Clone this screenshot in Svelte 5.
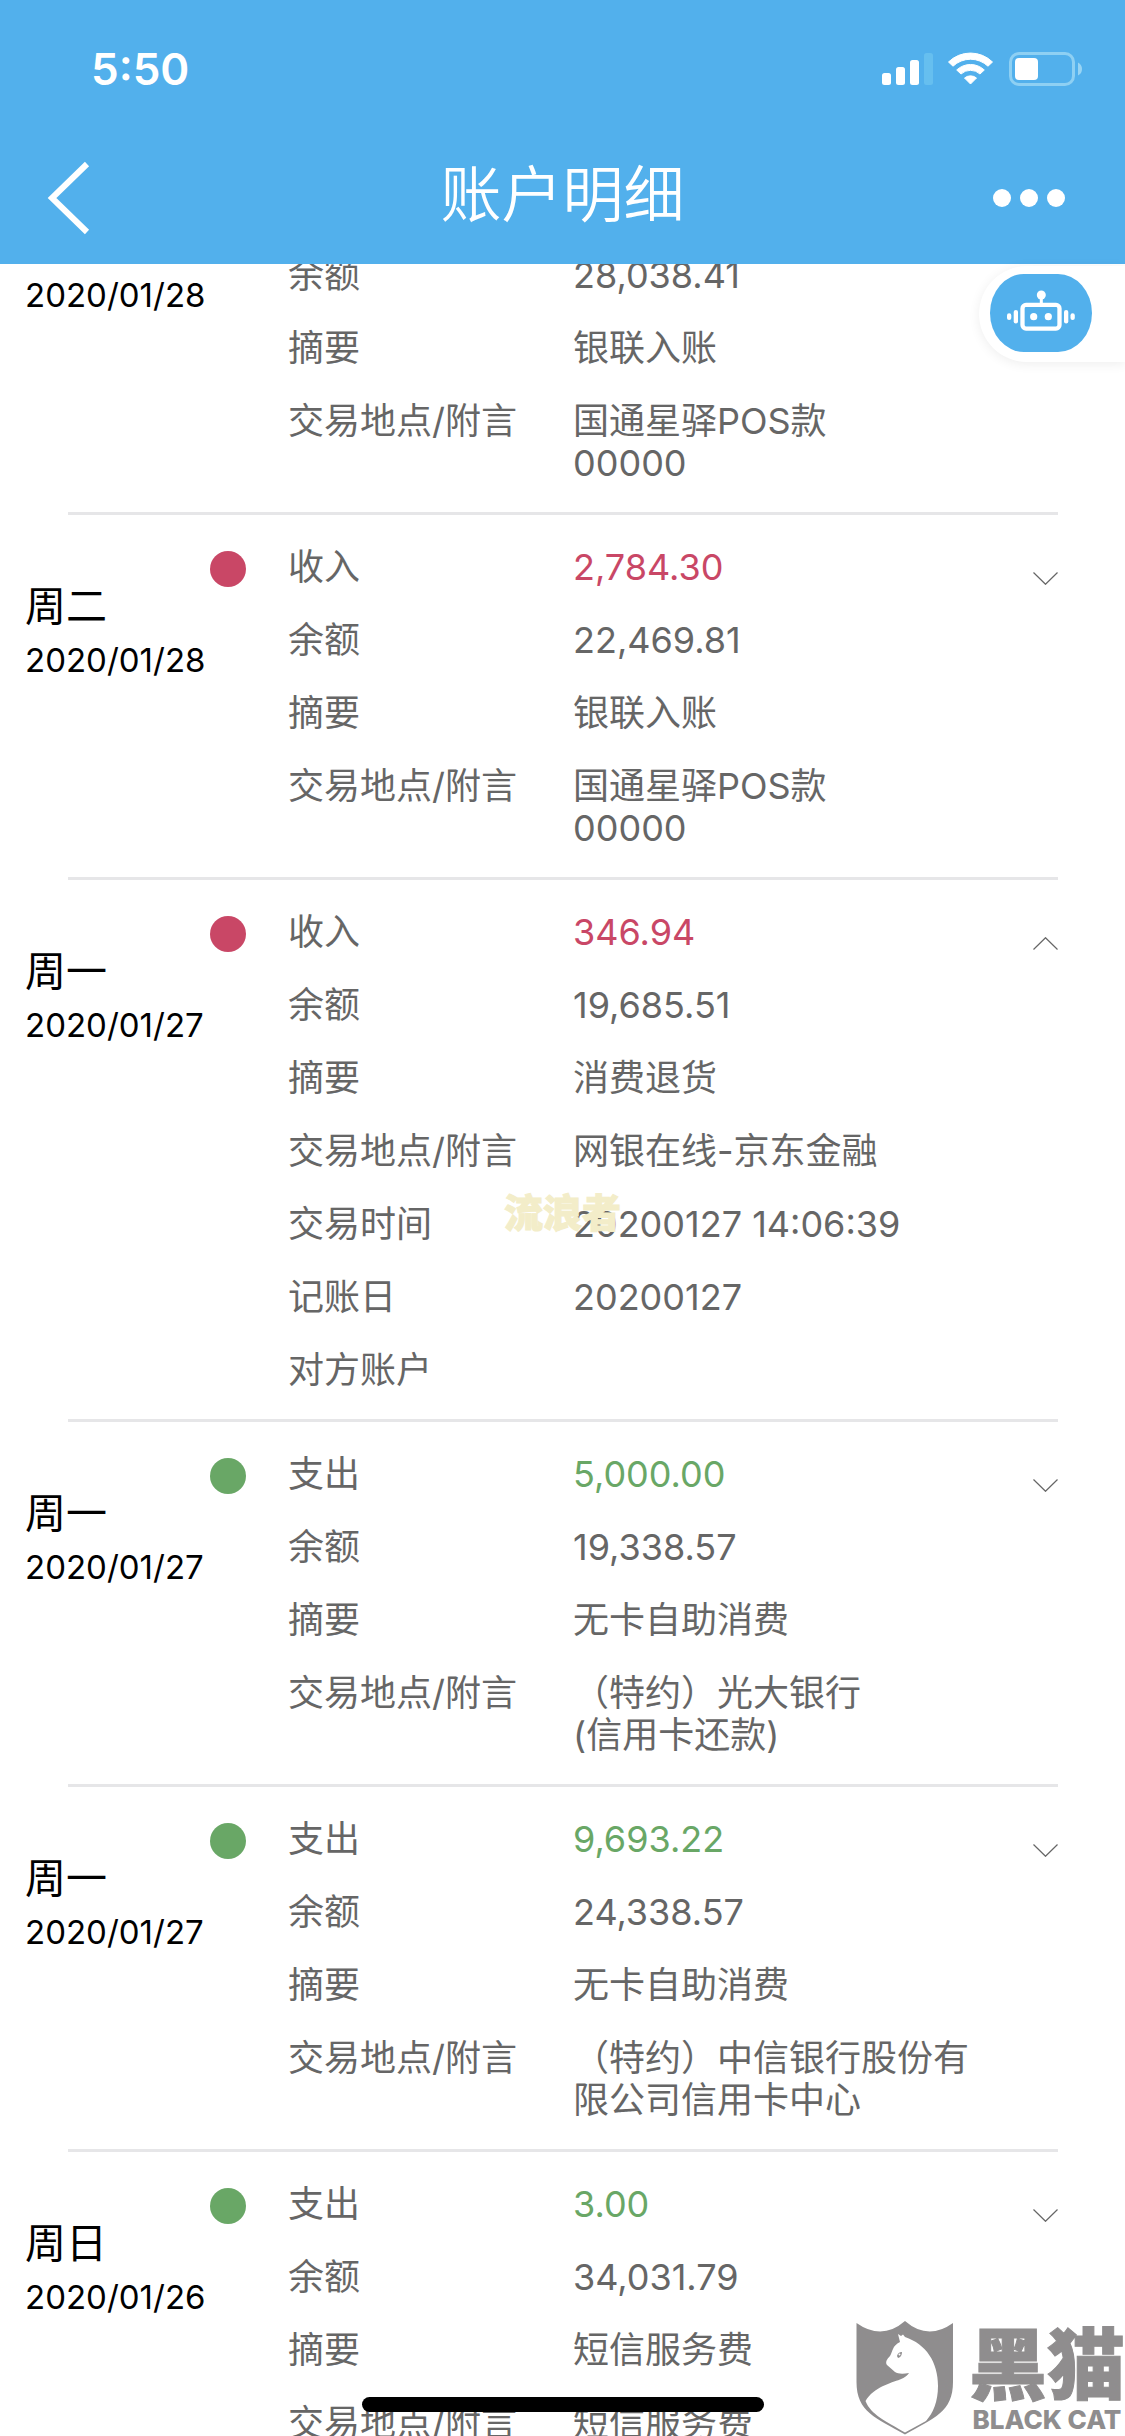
<script>
	import { onMount } from 'svelte';

	let list
	let records = [
		{ day: '周二', date: '2020/01/28', type: '收入', amount: '5,568.60', balance: '28,038.41', summary: '银联入账', note: '国通星驿POS款\n00000' },
		{ day: '周二', date: '2020/01/28', type: '收入', amount: '2,784.30', balance: '22,469.81', summary: '银联入账', note: '国通星驿POS款\n00000' },
		{ day: '周一', date: '2020/01/27', type: '收入', amount: '346.94', balance: '19,685.51', summary: '消费退货', note: '网银在线-京东金融', time: '20200127 14:06:39', booked: '20200127', account: '', open: true },
		{ day: '周一', date: '2020/01/27', type: '支出', amount: '5,000.00', balance: '19,338.57', summary: '无卡自助消费', note: '（特约）光大银行\n(信用卡还款)' },
		{ day: '周一', date: '2020/01/27', type: '支出', amount: '9,693.22', balance: '24,338.57', summary: '无卡自助消费', note: '（特约）中信银行股份有限公司信用卡中心' },
		{ day: '周日', date: '2020/01/26', type: '支出', amount: '3.00', balance: '34,031.79', summary: '短信服务费', note: '短信服务费' }
	]

	const getRows = (item) => {
		let rows = [
			['余额', item.balance],
			['摘要', item.summary],
			['交易地点/附言', item.note]
		]
		if (item.open) {
			rows.push(['交易时间', item.time || ''], ['记账日', item.booked || ''], ['对方账户', item.account || ''])
		}
		return rows
	}

	const toggle = (item) => {
		item.open = !item.open
		records = records
	}

	onMount(() => {
		list.scrollTop = 114
	});
</script>

<div class="screen">
	<header>
		<div class="status">
			<span class="clock">5:50</span>
			<svg class="status-icons" width="202" height="36" viewBox="0 0 202 36" fill="#fff">
				<rect x="1" y="22" width="9" height="12" rx="2.5" />
				<rect x="15" y="16" width="9" height="18" rx="2.5" />
				<rect x="29" y="9" width="9" height="25" rx="2.5" />
				<rect x="43" y="2" width="9" height="32" rx="2.5" fill="#66bfef" />
				<g transform="translate(67 1)">
					<path d="M0.5 10 A31.500 31.500 0 0 1 44.500 10 L40 14.200 A25.500 25.500 0 0 0 5 14.200 Z" stroke="#fff" stroke-linejoin="round" />
					<path d="M8.700 18 A20 20 0 0 1 36.300 18 L32 22 A14 14 0 0 0 13 22 Z" stroke="#fff" stroke-linejoin="round" />
					<path d="M16.500 26 A9.500 9.500 0 0 1 28.500 26 L22.500 32 Z" stroke="#fff" stroke-linejoin="round" />
				</g>
				<rect x="129.500" y="2.500" width="63" height="31" rx="8.500" fill="none" stroke="#8ed0f3" stroke-width="3" />
				<rect x="134" y="7" width="23" height="22" rx="4" />
				<path d="M197 11.500 Q201 13.500 201 18 Q201 22.500 197 24.500 Z" fill="#98d4f4" />
			</svg>
		</div>
		<div class="titlebar">
			<button class="bar-button" aria-label="返回">
				<svg width="44" height="74" viewBox="0 0 44 74"><path d="M41 3 L6 37 L41 71" fill="none" stroke="#fff" stroke-width="6" /></svg>
			</button>
			<h1>账户明细</h1>
			<button class="bar-button more" aria-label="更多">
				<svg width="72" height="18" viewBox="0 0 72 18" fill="#fff"><circle cx="9" cy="9" r="9" /><circle cx="36" cy="9" r="9" /><circle cx="63" cy="9" r="9" /></svg>
			</button>
		</div>
	</header>

	<main bind:this={list}>
		{#each records as item}
			<article>
				<div class="when">
					<p class="day">{item.day}</p>
					<p class="date">{item.date}</p>
				</div>
				<span class="dot" class:out={item.type === '支出'}></span>
				<dl>
					<dt>{item.type}</dt>
					<dd class="amount" class:out={item.type === '支出'}>{item.amount}</dd>
					{#each getRows(item) as [label, value]}
						<dt>{label}</dt>
						<dd>{value}</dd>
					{/each}
				</dl>
				<button class="toggle" aria-label="展开" aria-expanded={!!item.open} on:click={() => toggle(item)}>
					<svg width="25" height="13" viewBox="0 0 25 13"><path d={item.open ? 'M0.5 12.500 L12.500 0.700 L24.500 12.500' : 'M0.5 0.500 L12.500 12.300 L24.500 0.500'} fill="none" stroke="#666" stroke-width="1.200" /></svg>
				</button>
			</article>
			<hr>
		{/each}
	</main>

	<div class="helper">
		<button class="robot" aria-label="智能客服">
			<svg width="102" height="78" viewBox="0 0 102 78" fill="#fff">
				<circle cx="51.300" cy="21" r="4.500" />
				<rect x="49.800" y="23" width="3" height="7" />
				<rect x="32.500" y="30.900" width="37" height="23.700" rx="3.500" fill="none" stroke="#fff" stroke-width="4.300" />
				<circle cx="43.700" cy="42.700" r="3.600" />
				<circle cx="58.300" cy="42.700" r="3.600" />
				<rect x="23.700" y="36" width="4.300" height="13.500" rx="2.100" />
				<rect x="17" y="39.300" width="4.300" height="6.800" rx="2.100" />
				<rect x="74" y="36" width="4.300" height="13.500" rx="2.100" />
				<rect x="80.500" y="39.300" width="4.300" height="6.800" rx="2.100" />
			</svg>
		</button>
	</div>

	<div class="watermark">流浪者</div>
	<div class="home"></div>

	<div class="brand">
		<svg width="98" height="116" viewBox="0 0 98 116">
			<path d="M0.5 3 Q26 21 49 1 Q72 21 97 3 V62 C97 92 78 98 49 114.500 C20 98 0.5 92 0.5 62 Z" fill="#8f8d8e" />
			<path d="M42 14 L45 16 L47 14.500 L49 17 C70 24 82 42 82 66 C82 82 77 93 70 101 L49 112.500 C30 101 15 95 9.500 81 C18 67 35 63 44 59.500 C49 57.500 52 55 53 53 C47 54 42 54 39 52 L31 45 C29 42 31 39 34 36 C37 31 36 26 44 22 Z" fill="#fff" />
			<path d="M41 36 Q42 32 46 32 Q46 37 42 38 Z" fill="#8f8d8e" />
			<circle cx="43.500" cy="34.500" r="1" fill="#fff" />
		</svg>
		<div class="brand-text">
			<span class="brand-zh">黑猫</span>
			<span class="brand-en">BLACK CAT</span>
		</div>
	</div>
</div>

<style>
	:global(body) {
		background-color: #fff;
	}

	.screen {
		position: relative;
		display: flex;
		flex-direction: column;
		height: 100vh;
		overflow: hidden;
		font-family: Inter, "Noto Sans CJK SC", sans-serif;
	}

	h1, p, dl, dd {
		margin: 0;
	}

	button {
		padding: 0;
		border: none;
		background: none;
		cursor: pointer;
	}

	svg {
		display: block;
	}

	header {
		flex: none;
		height: 264px;
		background-color: #52b0ec;
		color: #fff;
	}

	.status {
		display: flex;
		justify-content: space-between;
		align-items: center;
		height: 138px;
		padding: 0 42px 0 91px;
	}

	.clock {
		font-size: 44px;
		font-weight: 600;
	}

	.titlebar {
		display: grid;
		grid-template-columns: 1fr auto 1fr;
		align-items: center;
		height: 120px;
		padding: 0 46px;
	}

	.bar-button {
		justify-self: start;
	}

	.more {
		justify-self: end;
		padding-right: 14px;
	}

	h1 {
		padding-bottom: 6px;
		font-size: 61px;
		font-weight: 350;
		line-height: 80px;
	}

	main {
		flex: 1;
		min-height: 0;
		overflow-y: auto;
		scrollbar-width: none;
	}

	article {
		display: grid;
		grid-template-columns: 185px 78px 1fr 25px;
		padding: 0 67px 0 25px;
	}

	hr {
		height: 3px;
		margin: 0 67px 0 68px;
		border: none;
		background-color: #e6e6e8;
	}

	.when {
		padding-top: 64px;
		line-height: 54px;
		color: #000;
	}

	.day {
		font-size: 41px;
	}

	.date {
		font-size: 33px;
	}

	.dot {
		width: 36px;
		height: 36px;
		margin-top: 36px;
		border-radius: 50%;
		background-color: #c94766;
	}

	.dot.out {
		background-color: #69a766;
	}

	dl {
		display: grid;
		grid-template-columns: 285px minmax(0, 405px);
		row-gap: 31px;
		align-content: start;
		padding: 31px 0 28px;
		font-size: 36px;
		line-height: 42px;
		color: #666;
	}

	dd {
		min-height: 42px;
		white-space: pre-line;
	}

	.amount {
		color: #c94766;
	}

	.amount.out {
		color: #69a766;
	}

	.toggle {
		align-self: start;
		padding: 57px 0 20px;
	}

	.helper {
		position: absolute;
		top: 266px;
		right: 0;
		padding: 8px 33px 10px 11px;
		border-radius: 48px 0 0 48px;
		background-color: #fff;
		box-shadow: 0 2px 12px rgba(0, 0, 0, 0.07);
	}

	.robot {
		display: block;
		border-radius: 34px / 39px;
		background-color: #52b0ec;
	}

	.watermark {
		position: absolute;
		top: 1183px;
		left: 0;
		right: 0;
		text-align: center;
		font-size: 39px;
		font-weight: 900;
		line-height: 60px;
		color: #f3edc9;
		-webkit-text-stroke: 1px #f3edc9;
		pointer-events: none;
	}

	.home {
		position: absolute;
		bottom: 24px;
		left: 50%;
		width: 402px;
		height: 15px;
		margin-left: -201px;
		border-radius: 8px;
		background-color: #000;
	}

	.brand {
		position: absolute;
		right: 0;
		bottom: 0;
		display: flex;
		gap: 15px;
		color: #8f8d8e;
	}

	.brand-text {
		display: flex;
		flex-direction: column;
		align-items: center;
		padding-top: 8px;
	}

	.brand-zh {
		font-size: 78px;
		font-weight: 900;
		line-height: 76px;
		-webkit-text-stroke: 1px #8f8d8e;
	}

	.brand-en {
		font-size: 26px;
		font-weight: 800;
		line-height: 32px;
	}
</style>
